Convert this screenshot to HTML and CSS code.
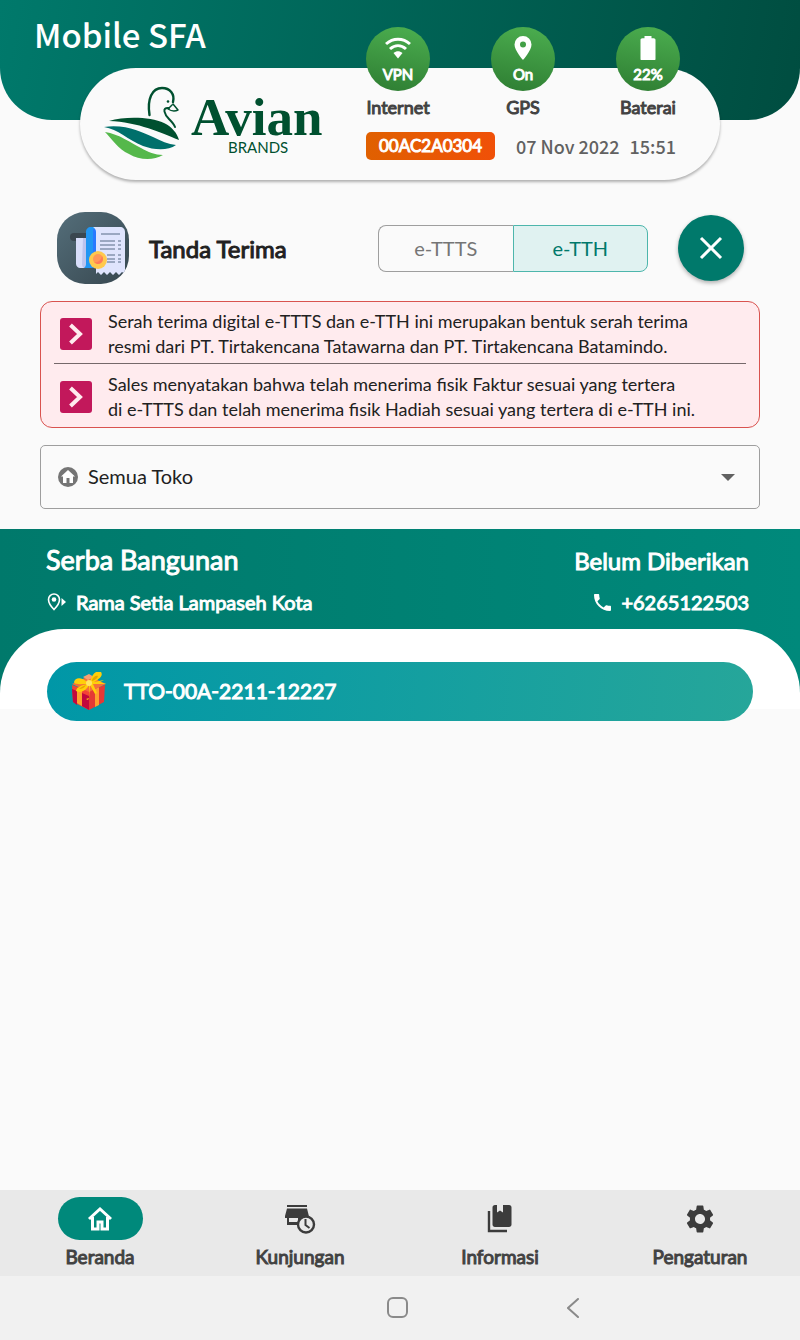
FILE: index.html
```html
<!DOCTYPE html>
<html lang="id">
<head>
<meta charset="utf-8">
<meta name="viewport" content="width=device-width, initial-scale=1">
<title>Mobile SFA</title>
<link rel="stylesheet" href="styles.css">
</head>
<body>
<header class="topbar">
  <h1 class="app-name">Mobile SFA</h1>
</header>

<section class="status-card">
  <svg class="logo" viewBox="0 0 220 74" role="img" aria-label="Avian Brands">
    <path fill="#00502f" d="M5 35C22 30 47 31 60 37c8 4 13 10 15 17C58 47 34 36 5 35Z"/>
    <path fill="#006f6b" d="M0 41c22-3 37 5 49 10 8 4 15 7 23 8-8 6-22 5-33 1C24 54 14 43 0 41Z"/>
    <path fill="#55b84b" d="M1 46c14 2 26 11 36 16 7 4 14 7 22 7-10 6-24 5-34-1C14 63 8 53 1 46Z"/>
    <path fill="none" stroke="#00502f" stroke-width="2.400" stroke-linecap="round" d="M45.500 29C43 13 48 2 58 2c8 0 13 6 11 14"/>
    <path fill="none" stroke="#00502f" stroke-width="1.500" stroke-linecap="round" stroke-linejoin="round" d="M69 18l5 6c-4 2-7 1-10-1l4-4"/>
    <path fill="none" stroke="#00502f" stroke-width="2" stroke-linecap="round" d="M65 22c-8-1-4 7 0 11 3 3 5 5 6 8"/>
    <circle cx="64" cy="15.500" r="1.300" fill="#00502f"/>
    <text class="logo-name" x="87" y="49">Avian</text>
    <text class="logo-sub" x="124" y="67">BRANDS</text>
  </svg>

  <div class="status">
    <ul class="signals">
      <li class="signal">
        <div class="disc">
          <svg class="disc-icon" viewBox="0 0 26 24"><path fill="none" stroke="#fff" stroke-width="3" d="M1 8c7-6.500 17-6.500 24 0M5 13c5-4.500 11-4.500 16 0"/><path fill="#fff" d="M8.500 17c3-2.400 6-2.400 9 0L13 22.500Z"/></svg>
          <span>VPN</span>
        </div>
        <span class="signal-label">Internet</span>
      </li>
      <li class="signal">
        <div class="disc">
          <svg class="disc-icon" viewBox="0 0 26 24"><path fill="#fff" fill-rule="evenodd" d="M13 0a8.500 8.500 0 0 0-8.500 8.500C4.500 14.500 13 24 13 24s8.500-9.500 8.500-15.500A8.500 8.500 0 0 0 13 0Zm0 11.500a3 3 0 1 1 0-6 3 3 0 0 1 0 6Z"/></svg>
          <span>On</span>
        </div>
        <span class="signal-label">GPS</span>
      </li>
      <li class="signal">
        <div class="disc">
          <svg class="disc-icon" viewBox="0 0 26 24"><path fill="#fff" d="M9.500 0h7v2.200h2.200c1.100 0 1.800.8 1.800 1.800v19c0 1-.7 1.500-1.500 1.500H7c-1 0-1.500-.6-1.500-1.500V4c0-1 .7-1.800 1.800-1.800h2.200Z"/></svg>
          <span>22%</span>
        </div>
        <span class="signal-label">Baterai</span>
      </li>
    </ul>
    <div class="session">
      <span class="device-code">00AC2A0304</span>
      <span class="clock"><time>07 Nov 2022</time><time>15:51</time></span>
    </div>
  </div>
</section>

<main class="content">
  <div class="page-head">
    <svg class="page-icon" viewBox="0 0 72 72" aria-hidden="true">
      <defs>
        <linearGradient id="slate" x1="0" y1="0" x2="1" y2="1"><stop offset="0" stop-color="#546e7a"/><stop offset="1" stop-color="#37474f"/></linearGradient>
        <clipPath id="tile"><rect width="72" height="72" rx="28"/></clipPath>
      </defs>
      <g clip-path="url(#tile)">
        <rect width="72" height="72" fill="url(#slate)"/>
        <rect x="13" y="21" width="20" height="8" rx="4" fill="#3a4750"/>
        <path fill="#d8defa" d="M19 26h14v30H23c-2 0-4-2-4-4Z"/>
        <path fill="#bcc4ee" d="M26 26h3v26c0 2 1 4 3 4h-4c-2 0-3-2-3-4Z"/>
        <path fill="#2196f3" d="M29 20c0-3 2-5 5-5h8v41H27c1-1 2-2 2-4Z"/>
        <path fill="#2979ff" d="M36 17h4v39h-4Z"/>
        <path fill="#dfe4fd" d="M36 15h27c3 0 5 2 5 5v42l-3-2-3 3-3-3-3 3-3-3-3 3-3-3-3 3-3-3-2 2V20c0-2-1-4-3-5Z"/>
        <path stroke="#566a86" stroke-width="1" d="M44 22h19M43 29h15M43 33h15M43 37h15M50 43h8M50 47h8M50 50h8M61 29h3M61 33h3M61 37h3M61 43h3M61 47h3M61 50h3"/>
        <circle cx="41" cy="48" r="9" fill="#ffc94d"/>
        <circle cx="41" cy="47" r="5" fill="#ff9858"/>
        <path fill="#ff7a59" d="M45 44a5 5 0 0 1-8 6c3 1 7-1 8-6Z"/>
      </g>
    </svg>
    <h2 class="page-title">Tanda Terima</h2>
    <div class="segmented" role="group" aria-label="Jenis tanda terima">
      <button class="segment" type="button" aria-pressed="false">e-TTTS</button>
      <button class="segment segment-active" type="button" aria-pressed="true">e-TTH</button>
    </div>
    <button class="close" type="button" aria-label="Tutup">
      <svg viewBox="0 0 24 24" width="24" height="24"><path stroke="#fff" stroke-width="3" d="M2 2l20 20M22 2L2 22"/></svg>
    </button>
  </div>

  <ul class="notice">
    <li class="notice-item">
      <svg class="notice-icon" viewBox="0 0 32 32"><rect width="32" height="32" rx="3" fill="#c2185b"/><path fill="none" stroke="#ffebee" stroke-width="4" d="M10.500 7l9.500 9-9.500 9"/></svg>
      <p>Serah terima digital e-TTTS dan e-TTH ini merupakan bentuk serah terima<br>resmi dari PT. Tirtakencana Tatawarna dan PT. Tirtakencana Batamindo.</p>
    </li>
    <li class="notice-item">
      <svg class="notice-icon" viewBox="0 0 32 32"><rect width="32" height="32" rx="3" fill="#c2185b"/><path fill="none" stroke="#ffebee" stroke-width="4" d="M10.500 7l9.500 9-9.500 9"/></svg>
      <p>Sales menyatakan bahwa telah menerima fisik Faktur sesuai yang tertera<br>di e-TTTS dan telah menerima fisik Hadiah sesuai yang tertera di e-TTH ini.</p>
    </li>
  </ul>

  <div class="picker">
    <svg viewBox="0 0 20 20" width="20" height="20" aria-hidden="true"><circle cx="10" cy="10" r="10" fill="#757575"/><path fill="#fff" d="M10 3l7 6.500h-2V16h-3.500v-5h-3v5H5V9.500H3Z"/></svg>
    <select class="picker-select" aria-label="Toko">
      <option>Semua Toko</option>
    </select>
    <svg viewBox="0 0 14 7" width="14" height="7" aria-hidden="true"><path fill="#616161" d="M0 0h14L7 7Z"/></svg>
  </div>
</main>

<section class="store">
  <div class="store-head">
    <div class="store-row">
      <h3 class="store-name">Serba Bangunan</h3>
      <span class="store-state">Belum Diberikan</span>
    </div>
    <div class="store-row store-contact">
      <span class="contact">
        <svg viewBox="0 0 20 18" width="20" height="18" aria-hidden="true"><path fill="none" stroke="#fff" stroke-width="1.600" d="M8 1a5.500 5.500 0 0 0-5.500 5.500C2.500 11 8 16.500 8 16.500s5.500-5.500 5.500-10A5.500 5.500 0 0 0 8 1Z"/><circle cx="8" cy="6.500" r="2.300" fill="#fff"/><path fill="#fff" d="M15.500 5l4.500 4-4.500 4Z"/></svg>
        Rama Setia Lampaseh Kota
      </span>
      <a class="contact" href="tel:+6265122503">
        <svg viewBox="3 3 18 18" width="17" height="17" aria-hidden="true"><path fill="#fff" d="M6.620 10.790c1.440 2.830 3.760 5.140 6.590 6.590l2.200-2.200c.27-.27.67-.36 1.020-.24 1.120.37 2.330.57 3.570.57.550 0 1 .45 1 1V20c0 .55-.45 1-1 1-9.390 0-17-7.610-17-17 0-.55.45-1 1-1h3.500c.55 0 1 .45 1 1 0 1.250.2 2.450.57 3.570.11.35.03.74-.25 1.020l-2.200 2.200Z"/></svg>
        +6265122503
      </a>
    </div>
  </div>
  <div class="store-body">
    <button class="receipt" type="button">
      <svg class="gift" viewBox="0 0 38 38" aria-hidden="true">
        <path fill="#f44336" d="M1 13l17 6v19L2 30Z"/>
        <path fill="#e53935" d="M18 19l16-6-1 17-15 8Z"/>
        <path fill="#c2083d" d="M1 17l5 2v14l-4-3ZM11 21l7 3v14l-7-4Z"/>
        <path fill="#ff9f2e" d="M6 16l5 2v16l-5-3ZM24 17l4-2v18l-4 2Z"/>
        <path fill="#f4703a" d="M1 12L18 4l17 8-17 8Z"/>
        <path fill="#f7a072" d="M12 5l6-3 5 3-6 3Z"/>
        <path fill="#ffcf0a" d="M17 11C10 4 4 6 3 10c0 3 8 2 14 2-7 1-12 4-12 7 6 3 11-2 13-6v13l-3 1 2 1 1-2 1-13 5 9 2-1-4-9 13 0-6-2 4-2-10 2c7-4 9-7 7-10-4-2-9 1-11 10Z"/>
        <path fill="#e5a500" d="M21 8c1-3 4-5 6-4-1 3-3 4-6 5ZM8 17c2-2 4-3 7-4-2 3-4 4-7 4Z"/>
        <circle cx="18" cy="11" r="3" fill="#ffe566"/>
      </svg>
      TTO-00A-2211-12227
    </button>
  </div>
</section>

<nav class="tabs" aria-label="Utama">
  <a class="tab" href="#beranda" aria-current="page">
    <span class="tab-icon tab-icon-active"><svg viewBox="0 0 26 24" width="26" height="24"><path fill="none" stroke="#fff" stroke-width="3" d="M2 12L13 2l11 10M5.500 10v12H11v-7h4v7h5.500V10"/></svg></span>
    Beranda
  </a>
  <a class="tab" href="#kunjungan">
    <span class="tab-icon"><svg viewBox="0 0 32 30" width="32" height="30"><path fill="#3c3c3c" d="M3 1h20v2H3Zm0 3.500h20l2 8V15h-2v6H3v-7H1v-2Zm2 9.500v4h9v-4Z" fill-rule="evenodd"/><circle cx="22" cy="20.500" r="8" fill="#e9e9e9" stroke="#3c3c3c" stroke-width="2.400"/><path fill="none" stroke="#3c3c3c" stroke-width="2" d="M21.500 15v6l4 3"/></svg></span>
    Kunjungan
  </a>
  <a class="tab" href="#informasi">
    <span class="tab-icon"><svg viewBox="0 0 26 28" width="26" height="28"><path fill="none" stroke="#3c3c3c" stroke-width="2.400" d="M2 6v20h18"/><path fill="#3c3c3c" d="M8 0h2v7.500l3-2 3 2V0h6c1.600 0 2.500 1 2.500 2.500v17c0 1.500-1 2.500-2.500 2.500H8c-1.500 0-2.500-1-2.500-2.500v-17C5.500 1 6.500 0 8 0Z"/></svg></span>
    Informasi
  </a>
  <a class="tab" href="#pengaturan">
    <span class="tab-icon"><svg viewBox="2 2 20 20" width="28" height="28"><path fill="#3c3c3c" d="M19.140 12.940c.04-.3.060-.61.060-.94 0-.32-.02-.64-.07-.94l2.030-1.580a.49.490 0 0 0 .12-.61l-1.920-3.320a.488.488 0 0 0-.59-.22l-2.390.96c-.5-.38-1.030-.7-1.620-.94l-.36-2.540a.484.484 0 0 0-.48-.41h-3.840c-.24 0-.43.17-.47.41l-.36 2.540c-.59.24-1.130.57-1.620.94l-2.390-.96c-.22-.08-.47 0-.59.22L2.740 8.870c-.12.21-.08.47.12.61l2.030 1.580c-.05.3-.09.63-.09.94s.02.64.07.94l-2.030 1.580a.49.490 0 0 0-.12.610l1.920 3.320c.12.22.37.29.59.22l2.390-.96c.5.38 1.030.7 1.620.94l.36 2.540c.05.24.24.41.48.41h3.840c.24 0 .44-.17.47-.41l.36-2.540c.59-.24 1.130-.56 1.620-.94l2.390.96c.22.080.47 0 .59-.22l1.920-3.320c.12-.22.070-.47-.12-.61l-2.010-1.580ZM12 15.600A3.610 3.610 0 0 1 8.400 12c0-1.980 1.620-3.600 3.600-3.600s3.600 1.620 3.600 3.600-1.620 3.600-3.600 3.600Z"/></svg></span>
    Pengaturan
  </a>
</nav>

<div class="system-bar">
  <button class="system-key" type="button" aria-label="Layar utama"><svg viewBox="0 0 22 22" width="22" height="22"><rect x="1" y="1" width="19" height="19" rx="5" fill="none" stroke="#8a8a8a" stroke-width="2"/></svg></button>
  <button class="system-key" type="button" aria-label="Kembali"><svg viewBox="0 0 12 20" width="12" height="20"><path fill="none" stroke="#8a8a8a" stroke-width="2" stroke-linecap="round" d="M11 1L1 10l10 9"/></svg></button>
</div>
</body>
</html>
```

FILE: styles.css
```css
* {
  box-sizing: border-box;
}

body {
  margin: 0;
  min-height: 100vh;
  display: flex;
  flex-direction: column;
  background: #fafafa;
  color: #212121;
  font-family: Lato, "Liberation Sans", sans-serif;
  font-size: 20px;
}

h1, h2, h3, p, ul {
  margin: 0;
  padding: 0;
  font-weight: 400;
}

ul {
  list-style: none;
}

a {
  color: inherit;
  text-decoration: none;
}

button, select {
  font: inherit;
  color: inherit;
  background: none;
  border: 0;
  padding: 0;
  cursor: pointer;
}

svg {
  display: block;
  flex: none;
}

/* Header */

.topbar {
  height: 120px;
  padding: 8px 34px;
  border-radius: 0 0 52px 52px;
  background: linear-gradient(100deg, #00796b, #004d40);
}

.app-name {
  color: #fff;
  font-family: "Noto Sans CJK SC", "Noto Sans", sans-serif;
  font-size: 33px;
  font-weight: 500;
  line-height: 52px;
}

.status-card {
  display: flex;
  justify-content: space-between;
  align-items: flex-start;
  margin: -52px 10% 0;
  padding: 0 40px 20px 24px;
  border-radius: 56px;
  background: #fafafa;
  box-shadow: 0 2px 3px rgba(0, 0, 0, 0.3);
}

.logo {
  width: 220px;
  height: 74px;
  margin-top: 18px;
}

.logo-name {
  fill: #00502f;
  font-family: "Liberation Serif", serif;
  font-size: 53px;
  font-weight: 700;
}

.logo-sub {
  fill: #00502f;
  font-size: 15px;
}

.status {
  width: 314px;
  margin-top: -41px;
}

.signals,
.session {
  display: flex;
  justify-content: space-between;
}

.signal {
  width: 64px;
  display: flex;
  flex-direction: column;
  align-items: center;
  gap: 4px;
}

.disc {
  width: 64px;
  height: 64px;
  padding-top: 9px;
  display: flex;
  flex-direction: column;
  align-items: center;
  gap: 4px;
  border-radius: 50%;
  background: linear-gradient(190deg, #4caf50, #2e7d32);
  color: #fff;
  font-size: 15px;
  line-height: 20px;
  -webkit-text-stroke: 1px;
}

.disc-icon {
  width: 26px;
  height: 24px;
}

.signal-label {
  color: #424242;
  font-size: 18px;
  line-height: 24px;
  -webkit-text-stroke: 1px;
}

.session {
  align-items: center;
  margin-top: 13px;
  padding-right: 4px;
}

.device-code {
  padding: 0 13px;
  border-radius: 5px;
  background: linear-gradient(90deg, #e06000, #f05008);
  color: #fff;
  font-size: 17px;
  line-height: 28px;
  -webkit-text-stroke: 1px;
}

.clock {
  display: flex;
  gap: 10px;
  color: #616161;
  font-family: "Noto Sans CJK SC", "Noto Sans", sans-serif;
  font-size: 18px;
  font-weight: 500;
  line-height: 28px;
}

/* Page head */

.content {
  padding: 32px 5% 20px;
}

.page-head {
  display: flex;
  align-items: center;
  padding: 0 16px 0 17px;
}

.page-icon {
  width: 72px;
  height: 72px;
}

.page-title {
  flex: 1;
  padding-left: 20px;
  font-size: 24px;
  -webkit-text-stroke: 1px;
}

.segmented {
  display: flex;
  width: 270px;
  height: 47px;
}

.segment {
  flex: 1;
  border: 1px solid #9e9e9e;
  border-right: 0;
  border-radius: 8px 0 0 8px;
  color: #757575;
}

.segment-active {
  border: 1px solid #4db6ac;
  border-radius: 0 8px 8px 0;
  background: #e0f2f1;
  color: #00796b;
}

.close {
  width: 66px;
  height: 66px;
  margin-left: 30px;
  display: grid;
  place-items: center;
  border-radius: 50%;
  background: #00796b;
  box-shadow: 0 2px 4px rgba(0, 0, 0, 0.3);
}

/* Notice */

.notice {
  margin-top: 17px;
  padding: 7px 13px 5px;
  border: 1px solid #d9534f;
  border-radius: 12px;
  background: #ffebee;
}

.notice-item {
  display: flex;
  align-items: center;
  gap: 16px;
  padding: 0 6px 4px;
  font-size: 18px;
  line-height: 25px;
}

.notice-item + .notice-item {
  padding: 8px 6px 0;
  border-top: 1px solid #75686a;
}

.notice-icon {
  width: 32px;
  height: 32px;
}

/* Store picker */

.picker {
  display: flex;
  align-items: center;
  height: 64px;
  margin-top: 17px;
  padding: 0 24px 0 17px;
  border: 1px solid #9e9e9e;
  border-radius: 5px;
}

.picker-select {
  flex: 1;
  height: 100%;
  padding: 0 0 2px 10px;
  appearance: none;
}

/* Store */

.store {
  background: linear-gradient(90deg, #00796b, #00897b);
  color: #fff;
}

.store-head {
  height: 100px;
  padding: 13px 51px 0 46px;
  -webkit-text-stroke: 1px;
}

.store-row {
  display: flex;
  justify-content: space-between;
  align-items: center;
}

.store-name {
  font-size: 27px;
  line-height: 36px;
}

.store-state {
  font-size: 24px;
}

.store-contact {
  margin-top: 12px;
  line-height: 24px;
}

.contact {
  display: flex;
  align-items: center;
  gap: 10px;
}

.store-body {
  height: 80px;
  padding: 33px 47px 0;
  border-radius: 64px 64px 0 0;
  background: #fff;
}

.receipt {
  width: 100%;
  height: 59px;
  padding: 0 0 2px 24px;
  display: flex;
  align-items: center;
  gap: 15px;
  border-radius: 30px;
  background: linear-gradient(95deg, #0097a7, #26a69a);
  color: #fff;
  font-size: 21px;
  -webkit-text-stroke: 1px;
}

.gift {
  width: 38px;
  height: 38px;
}

/* Bottom navigation */

.tabs {
  display: grid;
  grid-template-columns: repeat(4, 1fr);
  margin-top: auto;
  padding: 7px 0;
  background: #e9e9e9;
}

.tab {
  display: flex;
  flex-direction: column;
  align-items: center;
  gap: 5px;
  color: #424242;
  font-size: 19px;
  line-height: 24px;
  -webkit-text-stroke: 1px;
}

.tab-icon {
  width: 85px;
  height: 43px;
  display: grid;
  place-items: center;
}

.tab-icon-active {
  border-radius: 22px;
  background: #00897b;
}

.system-bar {
  display: grid;
  grid-template-columns: repeat(3, 1fr);
  height: 64px;
  padding: 0 140px 0 136px;
  background: #f1f1f1;
}

.system-key {
  display: grid;
  place-items: center;
}

.system-key:first-child {
  grid-column: 2;
}
```
